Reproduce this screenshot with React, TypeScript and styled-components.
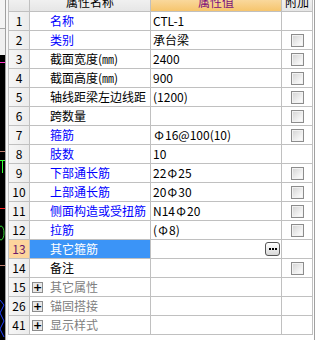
import React from "react";
import styled, { createGlobalStyle, css } from "styled-components";

const Global = createGlobalStyle`
  html, body { margin: 0; padding: 0; background: #ffffff; }
  body { font-family: "Noto Sans CJK SC", "Noto Sans", sans-serif; font-size: 12px; }
`;

const Page = styled.div`
  display: flex;
  width: 316px;
  height: 340px;
  overflow: hidden;
  background: #ffffff;
`;

const Strip = styled.div`
  width: 5px;
  display: flex;
  flex-direction: column;
`;

const StripTop = styled.div`
  height: 55px;
  display: flex;
  flex-direction: column;
  background: #f0f0f0;
`;

const StripTab = styled.div`
  height: 28px;
  border-bottom: 1px solid #a8a8a8;
  background: #f4f4f4;
`;

const Canvas = styled.div`
  flex: 1;
  background: #000000;
  overflow: hidden;
`;

const Divider = styled.div`
  width: 1px;
  background: #a0a0a0;
`;

const Gap = styled.div<{ $w: number; $bg?: string }>`
  width: ${(p) => p.$w}px;
  background: ${(p) => p.$bg ?? "#f7f7f7"};
`;

const Panel = styled.div`
  width: 305px;
  overflow: hidden;
  background: #ffffff;
`;

const Grid = styled.div`
  display: grid;
  grid-template-columns: 21px 121px 131px 31px;
  grid-auto-rows: 19px;
  margin-top: -7px;
  border-left: 1px solid #c0c0c0;
  line-height: 18px;
`;

const cellBase = css`
  box-sizing: border-box;
  border-right: 1px solid #c0c0c0;
  border-bottom: 1px solid #c0c0c0;
  display: flex;
  align-items: center;
  white-space: nowrap;
  overflow: hidden;
  font-size: 12px;
`;

const HeadCell = styled.div<{ $accent?: boolean }>`
  ${cellBase};
  justify-content: center;
  color: ${(p) => (p.$accent ? "#7b0d7b" : "#000000")};
  background: ${(p) =>
    p.$accent
      ? "linear-gradient(#fbe4ba, #f6c56d)"
      : "linear-gradient(#f7f7f7, #e6e6e6)"};
`;

const NumCell = styled.div<{ $active?: boolean }>`
  ${cellBase};
  justify-content: center;
  color: ${(p) => (p.$active ? "#6a1a6a" : "#000000")};
  background: ${(p) => (p.$active ? "#fdd59c" : "linear-gradient(90deg, #f6f6f6, #ececec)")};
`;

type Tone = "blue" | "black" | "gray";
const toneColor: Record<Tone, string> = { blue: "#0000ff", black: "#000000", gray: "#808080" };

const NameCell = styled.div<{ $tone: Tone; $selected?: boolean; $group?: boolean }>`
  ${cellBase};
  gap: 7px;
  padding-left: ${(p) => (p.$group ? 2 : 20)}px;
  color: ${(p) => (p.$selected ? "#ffffff" : toneColor[p.$tone])};
  background: ${(p) => (p.$selected ? "#3b94f7" : "#ffffff")};
`;

const ValueCell = styled.div`
  ${cellBase};
  justify-content: space-between;
  padding-left: 2px;
  padding-right: 1px;
  color: #000000;
  background: #ffffff;
`;

const ValueText = styled.span`
  display: flex;
  align-items: center;
`;

const Bar = styled.span`
  display: inline-block;
  width: 12px;
  text-align: center;
`;

const AddCell = styled.div`
  ${cellBase};
  justify-content: center;
  background: #ffffff;
`;

const Check = styled.div`
  box-sizing: border-box;
  width: 13px;
  height: 13px;
  border: 1px solid #8c8c8c;
  background: linear-gradient(135deg, #d2d2d2, #f4f4f4 70%, #ffffff);
  box-shadow: inset 0 0 0 1px #f2f2f2;
`;

const Plus = styled.div`
  box-sizing: border-box;
  width: 11px;
  height: 11px;
  border: 1px solid #8c8c8c;
  background: #e8e8e8;
  color: #000;
  display: flex;
  align-items: center;
  justify-content: center;
  font-size: 11px;
  line-height: 9px;
  font-weight: bold;
  font-family: "DejaVu Sans", sans-serif;
`;

const MoreButton = styled.div`
  box-sizing: border-box;
  width: 15px;
  height: 14px;
  border: 1px solid #555555;
  border-radius: 3px;
  background: linear-gradient(#ffffff, #d8d8d8);
  display: flex;
  align-items: center;
  justify-content: center;
  gap: 1px;
`;

const Dot = styled.span`
  width: 2px;
  height: 2px;
  background: #000;
`;

type Row = {
  n: string;
  name: string;
  tone: Tone;
  value?: string;
  check?: boolean;
  selected?: boolean;
  group?: boolean;
  more?: boolean;
};

const rows: Row[] = [
  { n: "1", name: "名称", tone: "blue", value: "CTL-1" },
  { n: "2", name: "类别", tone: "blue", value: "承台梁", check: true },
  { n: "3", name: "截面宽度(㎜)", tone: "black", value: "2400", check: true },
  { n: "4", name: "截面高度(㎜)", tone: "black", value: "900", check: true },
  { n: "5", name: "轴线距梁左边线距", tone: "black", value: "(1200)", check: true },
  { n: "6", name: "跨数量", tone: "black", value: "", check: true },
  { n: "7", name: "箍筋", tone: "blue", value: "Φ16@100(10)", check: true },
  { n: "8", name: "肢数", tone: "blue", value: "10" },
  { n: "9", name: "下部通长筋", tone: "blue", value: "22Φ25", check: true },
  { n: "10", name: "上部通长筋", tone: "blue", value: "20Φ30", check: true },
  { n: "11", name: "侧面构造或受扭筋", tone: "blue", value: "N14Φ20", check: true },
  { n: "12", name: "拉筋", tone: "blue", value: "(Φ8)", check: true },
  { n: "13", name: "其它箍筋", tone: "blue", value: "", selected: true, more: true },
  { n: "14", name: "备注", tone: "black", value: "", check: true },
  { n: "15", name: "其它属性", tone: "gray", group: true },
  { n: "26", name: "锚固搭接", tone: "gray", group: true },
  { n: "41", name: "显示样式", tone: "gray", group: true },
];

function renderValue(v: string) {
  const parts = v.split("Φ");
  return parts.map((p, i) => (
    <React.Fragment key={i}>
      {i > 0 && <Bar>Φ</Bar>}
      {p}
    </React.Fragment>
  ));
}

function CanvasDrawing() {
  return (
    <svg width="5" height="285" viewBox="0 0 5 285">
      <line x1="0" y1="7.5" x2="5" y2="7.5" stroke="#ff33cc" />
      <line x1="0" y1="96.5" x2="5" y2="96.5" stroke="#c08070" />
      <line x1="0" y1="105.5" x2="5" y2="105.5" stroke="#33ff33" />
      <line x1="2.5" y1="105" x2="2.5" y2="118" stroke="#33ff33" />
      <line x1="0" y1="153.5" x2="5" y2="153.5" stroke="#ff2020" />
      <ellipse cx="1" cy="178" rx="3" ry="7" fill="none" stroke="#33cc33" />
      <line x1="0" y1="210.5" x2="5" y2="210.5" stroke="#c08070" />
      <polyline points="0,245 4,250 0,258 4,266 0,274 4,282" fill="none" stroke="#2040ff" />
    </svg>
  );
}

export default function App() {
  return (
    <>
      <Global />
      <Page>
        <Strip>
          <StripTop>
            <StripTab />
          </StripTop>
          <Canvas>
            <CanvasDrawing />
          </Canvas>
        </Strip>
        <Divider />
        <Gap $w={2} />
        <Panel>
          <Grid>
            <HeadCell />
            <HeadCell>属性名称</HeadCell>
            <HeadCell $accent>属性值</HeadCell>
            <HeadCell>附加</HeadCell>
            {rows.map((r) => (
              <React.Fragment key={r.n}>
                <NumCell $active={r.selected}>{r.n}</NumCell>
                <NameCell $tone={r.tone} $selected={r.selected} $group={r.group}>
                  {r.group && <Plus>+</Plus>}
                  {r.name}
                </NameCell>
                <ValueCell>
                  <ValueText>{renderValue(r.value ?? "")}</ValueText>
                  {r.more && (
                    <MoreButton>
                      <Dot />
                      <Dot />
                      <Dot />
                    </MoreButton>
                  )}
                </ValueCell>
                <AddCell>{r.check && <Check />}</AddCell>
              </React.Fragment>
            ))}
          </Grid>
        </Panel>
        <Gap $w={1} $bg="#ffffff" />
        <Divider />
        <Gap $w={1} $bg="#ffffff" />
      </Page>
    </>
  );
}
